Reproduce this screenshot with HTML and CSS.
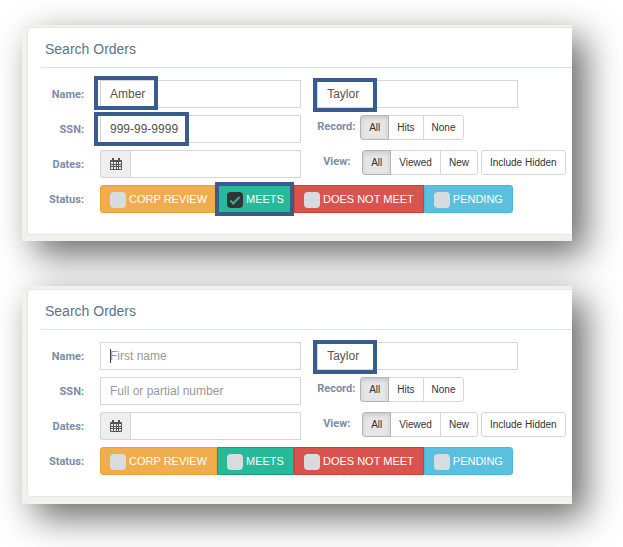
FILE: index.html
```
<!DOCTYPE html>
<html lang="en">
<head>
	<meta charset="UTF-8">
	<title>Search Orders</title>
	<link rel="stylesheet" href="styles.css">
</head>
<body>
	<div class="shot">
		<form class="card">
			<h2>Search Orders</h2>
			<div class="grid">
				<label class="name" for="first1">Name:</label>
				<div class="field">
					<input type="text" id="first1" value="Amber" placeholder="First name">
					<span class="mark mark-first"></span>
				</div>
				<div class="field last">
					<input type="text" value="Taylor" aria-label="Last name">
					<span class="mark mark-last"></span>
				</div>

				<label class="name" for="ssn1">SSN:</label>
				<div class="field">
					<input type="text" id="ssn1" value="999-99-9999" placeholder="Full or partial number">
					<span class="mark mark-ssn"></span>
				</div>
				<div class="options">
					<span class="name">Record:</span>
					<div class="group">
						<button type="button" class="active">All</button>
						<button type="button">Hits</button>
						<button type="button">None</button>
					</div>
				</div>

				<label class="name" for="dates1">Dates:</label>
				<div class="field dates">
					<span class="addon">
						<svg width="12" height="12" viewBox="0 0 12 12"><path fill="#555" fill-rule="evenodd" d="M1 2h1V0h2v2h4V0h2v2h1q1 0 1 1v8q0 1-1 1H1q-1 0-1-1V3q0-1 1-1zM1 4v2h2V4zM4 4v2h2V4zM7 4v2h1V4zM9 4v2h2V4zM1 7v1h2V7zM4 7v1h2V7zM7 7v1h1V7zM9 7v1h2V7zM1 9v2h2V9zM4 9v2h2V9zM7 9v2h1V9zM9 9v2h2V9z"/></svg>
					</span>
					<input type="text" id="dates1">
				</div>
				<div class="options view">
					<span class="name">View:</span>
					<div class="group">
						<button type="button" class="active">All</button>
						<button type="button">Viewed</button>
						<button type="button">New</button>
					</div>
					<button type="button">Include Hidden</button>
				</div>

				<span class="name">Status:</span>
				<div class="status">
					<label class="corp"><input type="checkbox">CORP REVIEW</label>
					<label class="meets"><input type="checkbox" checked>MEETS<span class="mark mark-meets"></span></label>
					<label class="not"><input type="checkbox">DOES NOT MEET</label>
					<label class="pending"><input type="checkbox">PENDING</label>
				</div>
			</div>
		</form>
	</div>

	<div class="shot second">
		<form class="card">
			<h2>Search Orders</h2>
			<div class="grid">
				<label class="name" for="first2">Name:</label>
				<div class="field">
					<input type="text" id="first2" placeholder="First name">
					<span class="caret"></span>
				</div>
				<div class="field last">
					<input type="text" value="Taylor" aria-label="Last name">
					<span class="mark mark-last"></span>
				</div>

				<label class="name" for="ssn2">SSN:</label>
				<div class="field">
					<input type="text" id="ssn2" placeholder="Full or partial number">
				</div>
				<div class="options">
					<span class="name">Record:</span>
					<div class="group">
						<button type="button" class="active">All</button>
						<button type="button">Hits</button>
						<button type="button">None</button>
					</div>
				</div>

				<label class="name" for="dates2">Dates:</label>
				<div class="field dates">
					<span class="addon">
						<svg width="12" height="12" viewBox="0 0 12 12"><path fill="#555" fill-rule="evenodd" d="M1 2h1V0h2v2h4V0h2v2h1q1 0 1 1v8q0 1-1 1H1q-1 0-1-1V3q0-1 1-1zM1 4v2h2V4zM4 4v2h2V4zM7 4v2h1V4zM9 4v2h2V4zM1 7v1h2V7zM4 7v1h2V7zM7 7v1h1V7zM9 7v1h2V7zM1 9v2h2V9zM4 9v2h2V9zM7 9v2h1V9zM9 9v2h2V9z"/></svg>
					</span>
					<input type="text" id="dates2">
				</div>
				<div class="options view">
					<span class="name">View:</span>
					<div class="group">
						<button type="button" class="active">All</button>
						<button type="button">Viewed</button>
						<button type="button">New</button>
					</div>
					<button type="button">Include Hidden</button>
				</div>

				<span class="name">Status:</span>
				<div class="status">
					<label class="corp"><input type="checkbox">CORP REVIEW</label>
					<label class="meets"><input type="checkbox">MEETS</label>
					<label class="not"><input type="checkbox">DOES NOT MEET</label>
					<label class="pending"><input type="checkbox">PENDING</label>
				</div>
			</div>
		</form>
	</div>
</body>
</html>
```
FILE: styles.css
```
*{
	margin: 0;
	padding: 0;
	box-sizing: border-box;
}
body{
	padding: 25px 51px 43px 22px;
	background-color: #fff;
	font-family: "Liberation Sans", Arial, sans-serif;
	font-size: 12px;
	color: #555;
}
.shot{
	padding: 2px 0 6px 5px;
	background-color: #f2f1ec;
	box-shadow: 13px 13px 34px rgba(0,0,0,0.6);
}
.second{
	margin-top: 45px;
	padding: 3px 0 7px 5px;
}
.card{
	padding: 0 0 20px 13px;
	background-color: #fff;
	border: 1px solid #e6e6e6;
	border-right: 0;
	border-radius: 4px 0 0 4px;
}
h2{
	height: 40px;
	padding-left: 4px;
	border-bottom: 1px solid #dde3ec;
	font-size: 14px;
	font-weight: normal;
	line-height: 42px;
	color: #5b7390;
}
.grid{
	display: grid;
	grid-template-columns: 43px minmax(0, 15fr) minmax(0, 19fr);
	align-items: start;
	column-gap: 16px;
	row-gap: 6px;
	padding-top: 12px;
}
.name{
	font-family: Roboto, "Liberation Sans", sans-serif;
	font-size: 11px;
	font-weight: bold;
	line-height: 29px;
	text-align: right;
	color: #7b8da8;
}
.field{
	display: flex;
	position: relative;
	height: 28px;
}
.last{
	width: 79%;
}
.field input{
	flex: 1;
	min-width: 0;
	height: 28px;
	padding: 0 9px;
	border: 1px solid #d5d5d5;
	background-color: #fff;
	font: inherit;
	color: #555;
}
.field input::placeholder{
	color: #999;
}
.addon{
	display: flex;
	align-items: center;
	justify-content: center;
	width: 30px;
	border: 1px solid #d5d5d5;
	border-right: 0;
	border-radius: 3px 0 0 3px;
	background-color: #eee;
}
.caret{
	position: absolute;
	top: 7px;
	left: 10px;
	width: 1px;
	height: 14px;
	background-color: #444;
}

/* blue callout frames */
.mark{
	position: absolute;
	border: 4px solid #385d8c;
	height: 34px;
	pointer-events: none;
}
.mark-first{
	top: -4px;
	left: -6px;
	width: 64px;
}
.mark-ssn{
	top: -3px;
	left: -6px;
	width: 95px;
}
.mark-last{
	top: -2px;
	left: -4px;
	width: 64px;
}
.mark-meets{
	z-index: 1;
	top: -4px;
	left: -3px;
	right: -1px;
}

.options{
	display: flex;
	align-items: flex-start;
	gap: 3px;
}
.options .name{
	min-width: 40px;
	line-height: 23px;
	text-align: left;
}
.view{
	padding-left: 6px;
}
.view .name{
	min-width: 36px;
}
.group{
	display: flex;
}
.options button{
	height: 25px;
	padding: 0 8px;
	border: 1px solid #d5d5d5;
	border-radius: 3px;
	background-color: #fff;
	font: inherit;
	font-size: 10px;
	white-space: nowrap;
	color: #333;
}
.group button{
	border-radius: 0;
	margin-left: -1px;
}
.group button:first-child{
	margin-left: 0;
	border-radius: 3px 0 0 3px;
}
.group button:last-child{
	border-radius: 0 3px 3px 0;
}
.options .active{
	position: relative;
	border-color: #b5b5b5;
	background-color: #e6e6e6;
	box-shadow: inset 0 2px 4px rgba(0,0,0,0.13);
}

.status{
	grid-column: 2 / 4;
	display: flex;
}
.status label{
	display: flex;
	align-items: center;
	position: relative;
	height: 28px;
	padding: 0 9px;
	border: 1px solid;
	font-size: 11px;
	white-space: nowrap;
	color: #fff;
}
.status input{
	appearance: none;
	position: relative;
	width: 16px;
	height: 16px;
	margin: 2px 3px 0 0;
	border-radius: 4px;
	background-color: #d7dcdf;
}
.status input:checked{
	background-color: #333;
}
.status input:checked::after{
	content: "";
	box-sizing: border-box;
	position: absolute;
	top: 5px;
	left: 3px;
	width: 10px;
	height: 5px;
	border-left: 2px solid #26b99a;
	border-bottom: 2px solid #26b99a;
	transform: rotate(-45deg);
}
.status .corp{
	background-color: #f0ad4e;
	border-color: #eea236;
	border-radius: 3px 0 0 3px;
}
.status .meets{
	background-color: #26b99a;
	border-color: #169f85;
}
.status .not{
	background-color: #d9534f;
	border-color: #d43f3a;
}
.status .pending{
	background-color: #5bc0de;
	border-color: #46b8da;
	border-radius: 0 3px 3px 0;
}
```
